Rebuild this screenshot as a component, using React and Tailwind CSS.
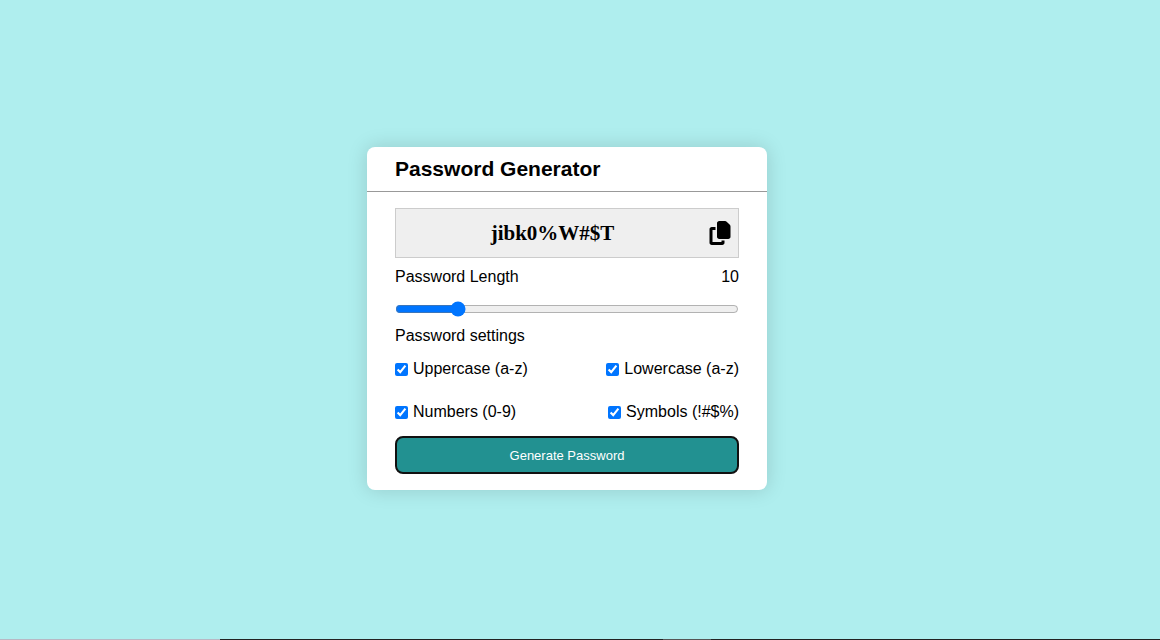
import { useState } from "react";
import { FaCopy } from "react-icons/fa6";

const SETTINGS = [
  { id: "uppercase", label: "Uppercase (a-z)" },
  { id: "lowercase", label: "Lowercase (a-z)" },
  { id: "numbers", label: "Numbers (0-9)" },
  { id: "symbols", label: "Symbols (!#$%)" },
];

const CHARS = {
  uppercase: "ABCDEFGHIJKLMNOPQRSTUVWXYZ",
  lowercase: "abcdefghijklmnopqrstuvwxyz",
  numbers: "0123456789",
  symbols: "!#$%",
};

function Setting({ id, label, checked, onChange }) {
  return (
    <label htmlFor={id} className="flex items-center gap-[5px]">
      <input
        id={id}
        type="checkbox"
        checked={checked}
        onChange={onChange}
        className="mt-px size-[13px] accent-[#0075ff]"
      />
      {label}
    </label>
  );
}

export default function App() {
  const [length, setLength] = useState(10);
  const [password, setPassword] = useState("jibk0%W#$T");
  const [enabled, setEnabled] = useState({
    uppercase: true,
    lowercase: true,
    numbers: true,
    symbols: true,
  });

  const toggle = (id) => setEnabled((prev) => ({ ...prev, [id]: !prev[id] }));

  const generate = () => {
    const pool = SETTINGS.filter((s) => enabled[s.id]).map((s) => CHARS[s.id]).join("");
    if (!pool) return;
    setPassword(
      Array.from({ length }, () => pool[Math.floor(Math.random() * pool.length)]).join("")
    );
  };

  const renderSetting = (s) => (
    <Setting
      key={s.id}
      id={s.id}
      label={s.label}
      checked={enabled[s.id]}
      onChange={() => toggle(s.id)}
    />
  );

  return (
    <div className="flex min-h-screen flex-col bg-[#afeeee] font-['Liberation_Sans',Arial,sans-serif] text-base text-black">
      <main className="flex grow items-center justify-center pr-[26px] pb-0.5">
        <section className="w-full max-w-[400px] rounded-lg bg-white shadow-[0_0_20px_rgba(0,0,0,0.15)]">
          <h1 className="border-b border-[#999] px-7 py-[7px] text-[21px] leading-[30px] font-bold">
            Password Generator
          </h1>
          <div className="px-7 py-4">
            <div className="flex h-[50px] items-center border border-[#ccc] bg-[#efefef] pr-[7px]">
              <output className="grow text-center font-['Liberation_Serif','Times_New_Roman',serif] text-[21px] leading-6 font-bold">
                {password}
              </output>
              <button
                type="button"
                aria-label="Copy password"
                onClick={() => navigator.clipboard?.writeText(password)}
              >
                <FaCopy className="h-6 w-[22px]" />
              </button>
            </div>
            <div className="flex justify-between pt-[9px] leading-5">
              <label htmlFor="length">Password Length</label>
              <span>{length}</span>
            </div>
            <input
              id="length"
              type="range"
              min="5"
              max="35"
              value={length}
              onChange={(e) => setLength(Number(e.target.value))}
              className="mt-[14px] block h-4 w-full accent-[#0075ff]"
            />
            <p className="pt-[9px] leading-5">Password settings</p>
            <div className="flex flex-col gap-[23px] pt-[13px] leading-5">
              <div className="flex justify-between">{SETTINGS.slice(0, 2).map(renderSetting)}</div>
              <div className="flex justify-between">{SETTINGS.slice(2).map(renderSetting)}</div>
            </div>
            <button
              type="button"
              onClick={generate}
              className="mt-[14px] h-[38px] w-full rounded-lg border-2 border-[#111] bg-[#229191] pt-0.5 text-[13px] text-white"
            >
              Generate Password
            </button>
          </div>
        </section>
      </main>
      <footer className="flex h-px bg-[#222]">
        <div className="w-[220px] bg-[#b8b8c4]" />
        <div className="ml-[443px] w-12 bg-[#555]" />
      </footer>
    </div>
  );
}
